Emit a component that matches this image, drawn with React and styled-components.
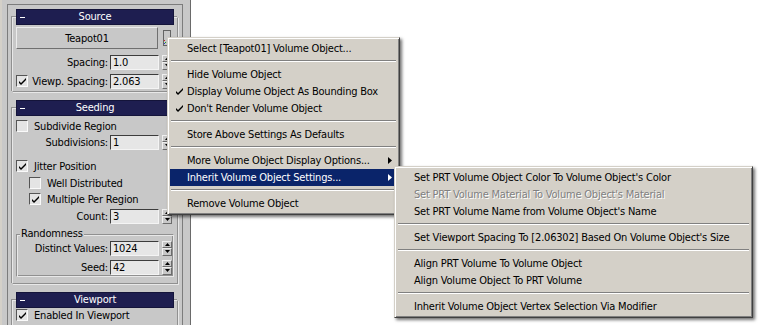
import React from 'react';
import styled, { createGlobalStyle } from 'styled-components';

const Global = createGlobalStyle`
  html, body { margin: 0; padding: 0; background: #fff; }
  body {
    font-family: "DejaVu Sans Condensed", "DejaVu Sans", sans-serif;
    font-size: 11px;
    letter-spacing: -0.2px;
    color: #000;
  }
  #root { width: 760px; height: 325px; }
`;

const Screen = styled.div`
  position: relative;
  width: 760px;
  height: 325px;
  overflow: hidden;
  display: flex;
  background: #fff;
`;

const Panel = styled.div`
  width: 191px;
  flex: none;
  box-sizing: border-box;
  background: #c8c8c8;
  border-left: 2px solid #d4d0c8;
  border-right: 1px solid #6a6a6a;
  padding: 4px 0 0 5px;
  display: flex;
`;

const Scroll = styled.div`
  width: 176px;
  box-sizing: border-box;
  border: 1px solid #7c7c7c;
  border-bottom: none;
  padding: 4px 4px 0 4px;
  overflow: hidden;
`;

const Rollout = styled.section`
  position: relative;
  width: 166px;
  box-sizing: border-box;
  padding: 0 4px ${p => p.$pb}px 4px;
  margin-bottom: 8px;
  &::before {
    content: '';
    position: absolute;
    left: 0;
    right: 0;
    top: 8px;
    bottom: 0;
    border: 1px solid;
    border-color: #e8e8e8 #909090 #909090 #e8e8e8;
    box-shadow: -1px -1px 0 #909090, 1px 1px 0 #e8e8e8;
    pointer-events: none;
  }
`;

const RollHeader = styled.div`
  position: relative;
  z-index: 1;
  height: 16px;
  box-sizing: border-box;
  background: #1e1e50;
  border: 1px solid #14143a;
  color: #fff;
  display: grid;
  grid-template-columns: 1fr auto 1fr;
  align-items: center;
`;

const Dash = styled.span`
  width: 5px;
  height: 1px;
  background: #fff;
  margin-left: 3px;
`;

const Title = styled.span`
  line-height: 14px;
`;

const ButtonRow = styled.div`
  display: flex;
  align-items: center;
  gap: 4px;
  margin-top: ${p => p.$mt}px;
  position: relative;
  z-index: 1;
`;

const BigButton = styled.div`
  width: 142px;
  height: 22px;
  box-sizing: border-box;
  border: 1px solid;
  border-color: #ececec #707070 #707070 #ececec;
  display: flex;
  align-items: center;
  justify-content: center;
`;

const PickButton = styled.div`
  width: 10px;
  height: 18px;
  display: flex;
`;

const Row = styled.div`
  position: relative;
  z-index: 1;
  display: flex;
  align-items: center;
  height: 16px;
  margin-top: ${p => p.$mt || 0}px;
  padding-left: ${p => p.$indent || 0}px;
  padding-right: 2px;
  white-space: nowrap;
`;

const Label = styled.span`
  flex: 1;
  text-align: right;
  margin-right: 2px;
`;

const CheckLabel = styled.span`
  margin-left: 6px;
`;

const Field = styled.div`
  width: 49px;
  height: 15px;
  box-sizing: border-box;
  background: #e6e6e6;
  border: 1px solid;
  border-color: #3c3c3c #f4f4f4 #f4f4f4 #3c3c3c;
  padding-left: 2px;
  display: flex;
  align-items: center;
  margin-right: 3px;
`;

const SpinBox = styled.div`
  width: 10px;
  height: 15px;
  display: flex;
  flex-direction: column;
`;

const SpinHalf = styled.div`
  flex: 1;
  box-sizing: border-box;
  border: 1px solid;
  border-color: #f0f0f0 #6c6c6c #6c6c6c #f0f0f0;
  display: flex;
  align-items: center;
  justify-content: center;
`;

const BoxWrap = styled.div`
  width: 12px;
  height: 12px;
  flex: none;
  box-sizing: border-box;
  background: #e4e4e4;
  border: 1px solid;
  border-color: #555 #fafafa #fafafa #555;
  display: flex;
  align-items: center;
  justify-content: center;
`;

const Group = styled.div`
  position: relative;
  margin-top: ${p => p.$mt}px;
  padding-bottom: 2px;
  &::before {
    content: '';
    position: absolute;
    left: 0;
    right: 0;
    top: 6px;
    bottom: 0;
    border: 1px solid;
    border-color: #909090 #e8e8e8 #e8e8e8 #909090;
    box-shadow: inset 1px 1px 0 #e8e8e8, inset -1px -1px 0 #909090;
    pointer-events: none;
  }
`;

const GroupTitle = styled.div`
  position: relative;
  z-index: 1;
  height: 12px;
  line-height: 12px;
  margin-left: 4px;
  padding: 0 1px;
  background: #c8c8c8;
  width: max-content;
`;

const White = styled.div`
  flex: 1;
  background: #fff;
`;

const Menu = styled.div`
  position: absolute;
  left: ${p => p.$x}px;
  top: ${p => p.$y}px;
  width: ${p => p.$w}px;
  box-sizing: border-box;
  background: #d4d0c8;
  border: 1px solid;
  border-color: #d4d0c8 #404040 #404040 #d4d0c8;
  box-shadow: inset 1px 1px 0 #fff, inset -1px -1px 0 #808080, 2px 2px 3px rgba(0, 0, 0, 0.55);
  padding: 2px;
  z-index: ${p => p.$z};
`;

const Item = styled.div`
  height: 17px;
  display: grid;
  grid-template-columns: 17px 1fr 14px;
  align-items: center;
  white-space: nowrap;
  color: ${p => (p.$disabled ? '#808080' : p.$active ? '#fff' : '#000')};
  background: ${p => (p.$active ? '#0a246a' : 'transparent')};
  text-shadow: ${p => (p.$disabled ? '1px 1px 0 #fff' : 'none')};
`;

const Gutter = styled.span`
  display: flex;
  align-items: center;
  padding-left: 6px;
`;

const ArrowCell = styled.span`
  display: flex;
  align-items: center;
  padding-left: 5px;
`;

const Sep = styled.div`
  height: 2px;
  margin: 3px 1px 4px 1px;
  border-top: 1px solid #808080;
  border-bottom: 1px solid #fff;
  box-sizing: border-box;
`;

const CheckMark = ({ color = '#000' }) => (
  <svg width="7" height="7" viewBox="0 0 7 7">
    <polygon points="0,3 2,5 7,0 7,2 2,7 0,5" fill={color} />
  </svg>
);

const Arrow = ({ color }) => (
  <svg width="4" height="7" viewBox="0 0 4 7">
    <polygon points="0,0 4,3.5 0,7" fill={color} />
  </svg>
);

const Spinner = () => (
  <SpinBox>
    <SpinHalf>
      <svg width="5" height="3" viewBox="0 0 5 3"><polygon points="2.5,0 5,3 0,3" fill="#000" /></svg>
    </SpinHalf>
    <SpinHalf>
      <svg width="5" height="3" viewBox="0 0 5 3"><polygon points="0,0 5,0 2.5,3" fill="#000" /></svg>
    </SpinHalf>
  </SpinBox>
);

const Box = ({ checked }) => <BoxWrap>{checked && <CheckMark />}</BoxWrap>;

const Header = ({ children }) => (
  <RollHeader>
    <Dash />
    <Title>{children}</Title>
    <span />
  </RollHeader>
);

const MenuItem = ({ children, checked, sub, active, disabled }) => (
  <Item $active={active} $disabled={disabled}>
    <Gutter>{checked && <CheckMark color={active ? '#fff' : '#000'} />}</Gutter>
    <span>{children}</span>
    <ArrowCell>{sub && <Arrow color={active ? '#fff' : '#000'} />}</ArrowCell>
  </Item>
);

export default function App() {
  return (
    <>
      <Global />
      <Screen>
        <Panel>
          <Scroll>
            <Rollout $pb={3}>
              <Header>Source</Header>
              <ButtonRow $mt={2}>
                <BigButton>Teapot01</BigButton>
                <PickButton>
                  <svg width="10" height="18" viewBox="0 0 10 18">
                    <rect x="1.5" y="1.5" width="7" height="15" fill="none" stroke="#000" strokeDasharray="1 1" />
                    <rect x="2" y="11" width="1" height="1" fill="#d02020" />
                    <rect x="3" y="13" width="1" height="1" fill="#20a020" />
                    <rect x="2" y="14" width="1" height="1" fill="#2040d0" />
                  </svg>
                </PickButton>
              </ButtonRow>
              <Row $mt={5}>
                <Label>Spacing:</Label>
                <Field>1.0</Field>
                <Spinner />
              </Row>
              <Row $mt={3}>
                <Box checked />
                <Label>Viewp. Spacing:</Label>
                <Field>2.063</Field>
                <Spinner />
              </Row>
            </Rollout>

            <Rollout $pb={7}>
              <Header>Seeding</Header>
              <Row $mt={2}>
                <Box />
                <CheckLabel>Subdivide Region</CheckLabel>
              </Row>
              <Row>
                <Label>Subdivisions:</Label>
                <Field>1</Field>
                <Spinner />
              </Row>
              <Row $mt={8}>
                <Box checked />
                <CheckLabel>Jitter Position</CheckLabel>
              </Row>
              <Row $mt={1} $indent={13}>
                <Box />
                <CheckLabel>Well Distributed</CheckLabel>
              </Row>
              <Row $indent={13}>
                <Box checked />
                <CheckLabel>Multiple Per Region</CheckLabel>
              </Row>
              <Row $mt={1}>
                <Label>Count:</Label>
                <Field>3</Field>
                <Spinner />
              </Row>
              <Group $mt={4}>
                <GroupTitle>Randomness</GroupTitle>
                <Row>
                  <Label>Distinct Values:</Label>
                  <Field>1024</Field>
                  <Spinner />
                </Row>
                <Row $mt={3}>
                  <Label>Seed:</Label>
                  <Field>42</Field>
                  <Spinner />
                </Row>
              </Group>
            </Rollout>

            <Rollout $pb={4}>
              <Header>Viewport</Header>
              <Row $mt={-1}>
                <Box checked />
                <CheckLabel>Enabled In Viewport</CheckLabel>
              </Row>
            </Rollout>
          </Scroll>
        </Panel>
        <White />

        <Menu $x={167} $y={37} $w={233} $z={5}>
          <MenuItem>Select [Teapot01] Volume Object...</MenuItem>
          <Sep />
          <MenuItem>Hide Volume Object</MenuItem>
          <MenuItem checked>Display Volume Object As Bounding Box</MenuItem>
          <MenuItem checked>Don't Render Volume Object</MenuItem>
          <Sep />
          <MenuItem>Store Above Settings As Defaults</MenuItem>
          <Sep />
          <MenuItem sub>More Volume Object Display Options...</MenuItem>
          <MenuItem sub active>Inherit Volume Object Settings...</MenuItem>
          <Sep />
          <MenuItem>Remove Volume Object</MenuItem>
        </Menu>

        <Menu $x={394} $y={166} $w={359} $z={6}>
          <MenuItem>Set PRT Volume Object Color To Volume Object's Color</MenuItem>
          <MenuItem disabled>Set PRT Volume Material To Volume Object's Material</MenuItem>
          <MenuItem>Set PRT Volume Name from Volume Object's Name</MenuItem>
          <Sep />
          <MenuItem>Set Viewport Spacing To [2.06302] Based On Volume Object's Size</MenuItem>
          <Sep />
          <MenuItem>Align PRT Volume To Volume Object</MenuItem>
          <MenuItem>Align Volume Object To PRT Volume</MenuItem>
          <Sep />
          <MenuItem>Inherit Volume Object Vertex Selection Via Modifier</MenuItem>
        </Menu>
      </Screen>
    </>
  );
}
